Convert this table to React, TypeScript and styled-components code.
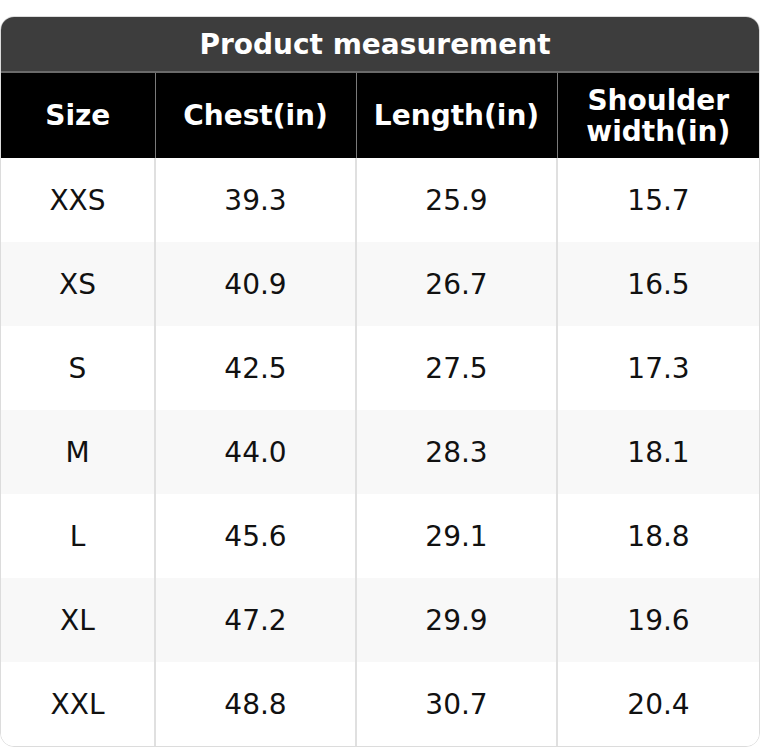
import React from 'react';
import styled, { createGlobalStyle } from 'styled-components';

const GlobalStyle = createGlobalStyle`
  html, body {
    margin: 0;
    padding: 0;
    background: #fff;
  }
  body {
    font-family: "DejaVu Sans", "Liberation Sans", sans-serif;
  }
`;

const Page = styled.div`
  padding: 16px 0 0;
`;

const Card = styled.div`
  border: 1px solid #dcdcdc;
  border-radius: 14px;
  overflow: hidden;
  background: #fff;
`;

const Table = styled.table`
  width: 100%;
  border-collapse: collapse;
  table-layout: fixed;
`;

const TitleCell = styled.th`
  background: #3d3d3d;
  color: #fff;
  font-size: 28px;
  font-weight: bold;
  height: 54px;
  padding: 0 10px 0 0;
  border-bottom: 2px solid #6a6a6a;
`;

const HeadCell = styled.th`
  background: #000;
  color: #fff;
  font-size: 28px;
  font-weight: bold;
  line-height: 31px;
  height: 85px;
  padding: 0 8px;
  border-left: 1px solid #7a7a7a;
  &:first-child {
    border-left: none;
  }
`;

const Row = styled.tr<{ $alt: boolean }>`
  background: ${p => (p.$alt ? '#f8f8f8' : '#fff')};
`;

const Cell = styled.td`
  height: 84px;
  padding: 0;
  text-align: center;
  font-size: 28px;
  color: #111;
  border-left: 2px solid #e0e0e0;
  &:first-child {
    border-left: none;
  }
`;

const headers = ['Size', 'Chest(in)', 'Length(in)', 'Shoulder width(in)'];

const rows = [
  ['XXS', '39.3', '25.9', '15.7'],
  ['XS', '40.9', '26.7', '16.5'],
  ['S', '42.5', '27.5', '17.3'],
  ['M', '44.0', '28.3', '18.1'],
  ['L', '45.6', '29.1', '18.8'],
  ['XL', '47.2', '29.9', '19.6'],
  ['XXL', '48.8', '30.7', '20.4'],
];

const App: React.FC = () => {
  return (
    <Page>
      <GlobalStyle />
      <Card>
        <Table>
          <colgroup>
            <col style={{ width: 154 }} />
            <col style={{ width: 201 }} />
            <col style={{ width: 201 }} />
            <col />
          </colgroup>
          <thead>
            <tr>
              <TitleCell colSpan={4}>Product measurement</TitleCell>
            </tr>
            <tr>
              {headers.map(h => (
                <HeadCell key={h}>{h}</HeadCell>
              ))}
            </tr>
          </thead>
          <tbody>
            {rows.map((r, i) => (
              <Row key={r[0]} $alt={i % 2 === 1}>
                {r.map((v, j) => (
                  <Cell key={j}>{v}</Cell>
                ))}
              </Row>
            ))}
          </tbody>
        </Table>
      </Card>
    </Page>
  );
};

export default App;
